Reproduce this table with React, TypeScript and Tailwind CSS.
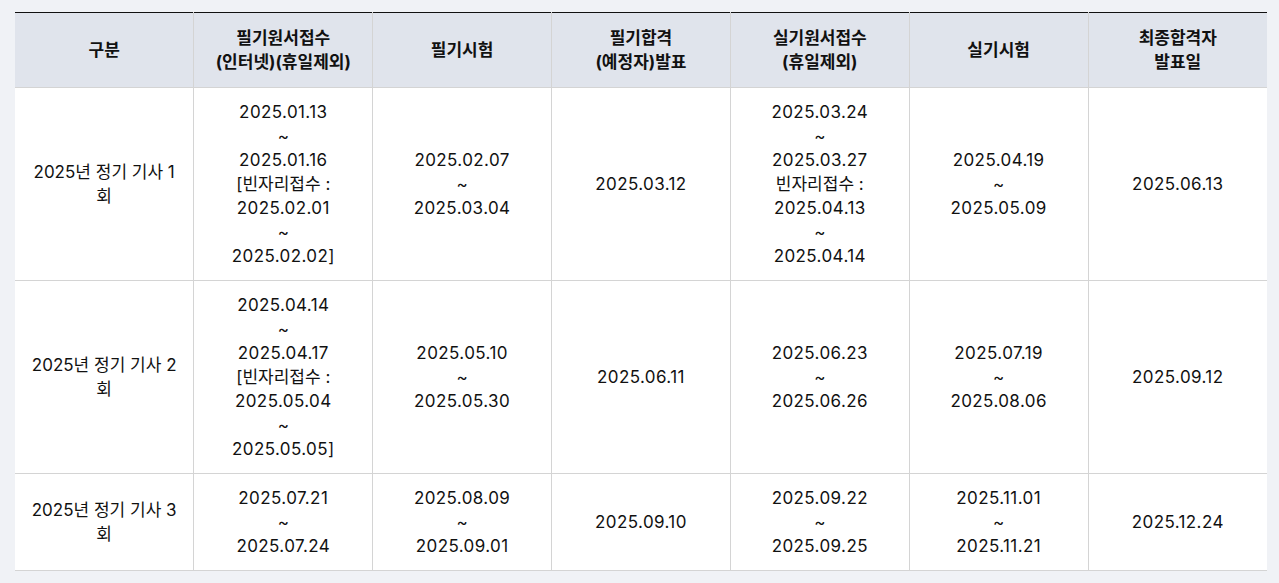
import React from "react";

const HEADERS = [
  ["구분"],
  ["필기원서접수", "(인터넷)(휴일제외)"],
  ["필기시험"],
  ["필기합격", "(예정자)발표"],
  ["실기원서접수", "(휴일제외)"],
  ["실기시험"],
  ["최종합격자", "발표일"],
];

const ROWS: string[][][] = [
  [
    ["2025년 정기 기사 1 회"],
    ["2025.01.13", "~", "2025.01.16", "[빈자리접수 :", "2025.02.01", "~", "2025.02.02]"],
    ["2025.02.07", "~", "2025.03.04"],
    ["2025.03.12"],
    ["2025.03.24", "~", "2025.03.27", "빈자리접수 :", "2025.04.13", "~", "2025.04.14"],
    ["2025.04.19", "~", "2025.05.09"],
    ["2025.06.13"],
  ],
  [
    ["2025년 정기 기사 2 회"],
    ["2025.04.14", "~", "2025.04.17", "[빈자리접수 :", "2025.05.04", "~", "2025.05.05]"],
    ["2025.05.10", "~", "2025.05.30"],
    ["2025.06.11"],
    ["2025.06.23", "~", "2025.06.26"],
    ["2025.07.19", "~", "2025.08.06"],
    ["2025.09.12"],
  ],
  [
    ["2025년 정기 기사 3 회"],
    ["2025.07.21", "~", "2025.07.24"],
    ["2025.08.09", "~", "2025.09.01"],
    ["2025.09.10"],
    ["2025.09.22", "~", "2025.09.25"],
    ["2025.11.01", "~", "2025.11.21"],
    ["2025.12.24"],
  ],
];

// date-only lines render a touch wider in the original
const isDate = (s: string) => /^[\d.\]]+$/.test(s);

export default function App() {
  return (
    <div
      className="min-h-[583px] bg-[#f0f2f6] pt-3 pl-[15px] text-[#111111]"
      style={{ fontFamily: "Inter, 'Noto Sans CJK KR', sans-serif" }}
    >
      <table className="w-[1252px] table-fixed border-collapse border-t border-t-[#111111] bg-white text-[17px] leading-6">
        <thead>
          <tr className="bg-[#e0e4ec]">
            {HEADERS.map((lines, i) => (
              <th
                key={i}
                className="border-b border-l border-[#d4d4d4] px-4 pt-[13px] pb-[13px] text-center align-middle font-bold first:border-l-0"
              >
                {lines.map((l, j) => (
                  <div key={j}>{l}</div>
                ))}
              </th>
            ))}
          </tr>
        </thead>
        <tbody>
          {ROWS.map((row, r) => (
            <tr key={r}>
              {row.map((lines, c) => (
                <td
                  key={c}
                  className="border-b border-l border-[#d4d4d4] px-4 py-3 text-center align-middle first:border-l-0"
                >
                  {lines.map((l, j) => (
                    <div key={j} className={isDate(l) ? "tracking-[0.4px]" : ""}>
                      {l}
                    </div>
                  ))}
                </td>
              ))}
            </tr>
          ))}
        </tbody>
      </table>
    </div>
  );
}
